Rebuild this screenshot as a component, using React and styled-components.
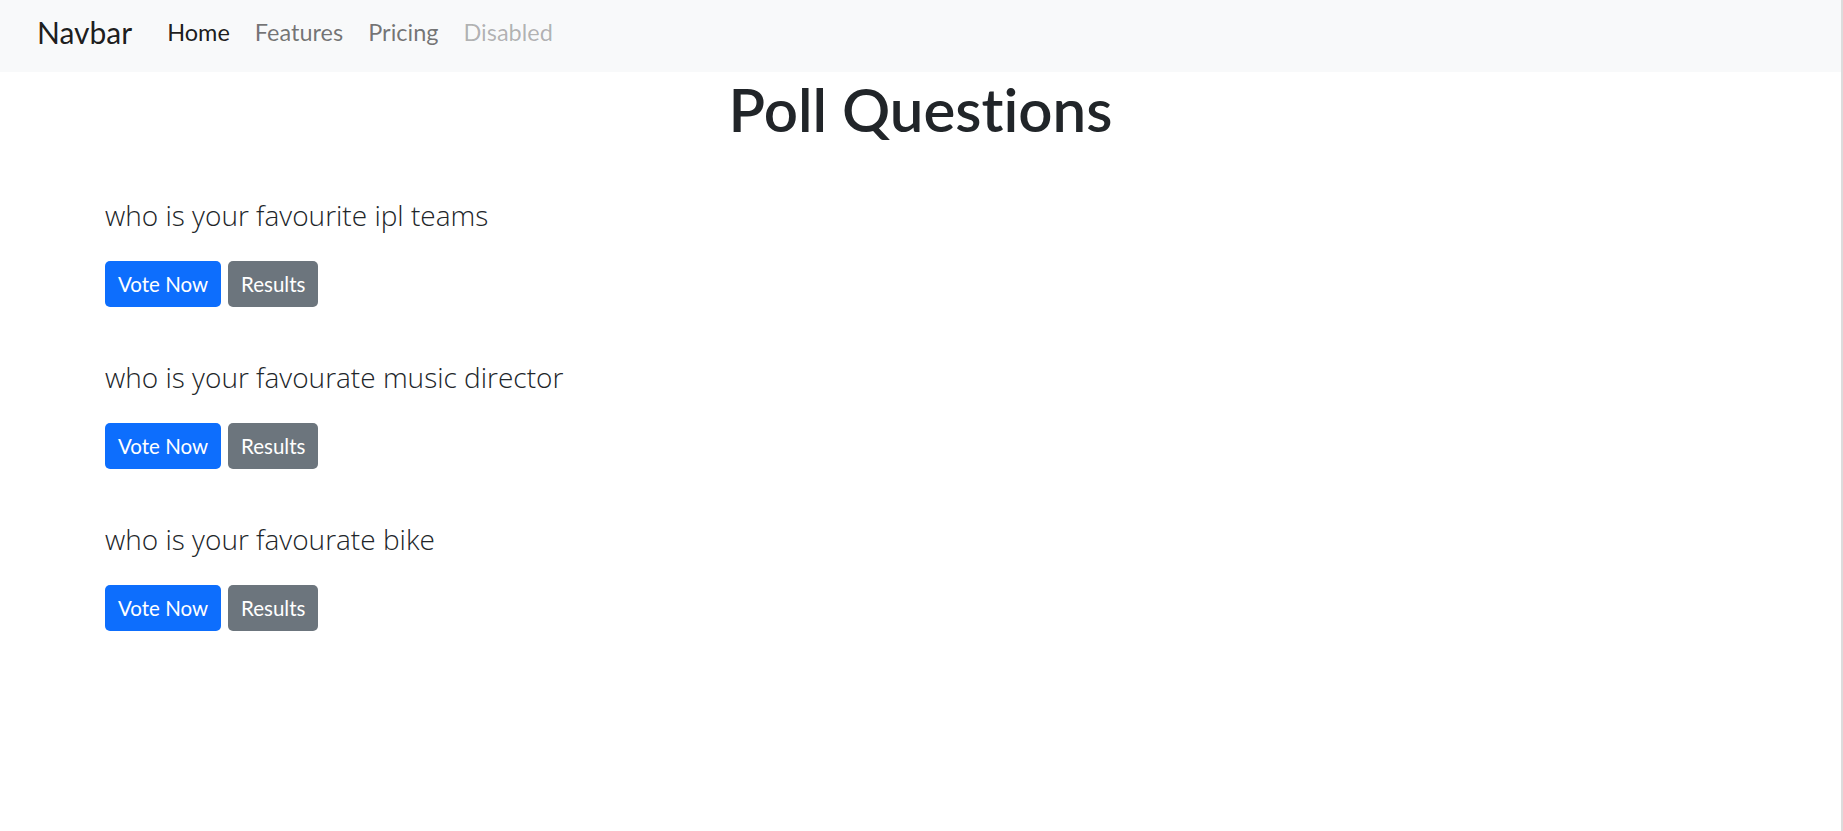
import styled, { createGlobalStyle } from "styled-components";

const GlobalStyle = createGlobalStyle`
    body {
        margin: 0;
        background-color: #fff;
        font-family: Lato, "Open Sans", sans-serif;
        font-variant-ligatures: none;
        color: #212529;
    }
`;

const Page = styled.div`
    min-height: 100vh;
    border-right: 2px solid #dcdcdc;
    box-sizing: border-box;
`;

const Nav = styled.nav`
    height: 72px;
    background-color: #f8f9fa;
    display: flex;
    align-items: center;
    padding-left: 37px;
    padding-bottom: 9px;
    box-sizing: border-box;
`;

const Brand = styled.a`
    font-size: 30px;
    color: rgba(0, 0, 0, 0.9);
    margin-right: 35px;
    text-decoration: none;
`;

const NavLinks = styled.div`
    display: flex;
    gap: 25px;
`;

const NavLink = styled.a`
    font-size: 23.5px;
    text-decoration: none;
    color: ${(props) =>
        props.active ? "rgba(0,0,0,.9)" : props.disabled ? "rgba(0,0,0,.3)" : "rgba(0,0,0,.55)"};
`;

const Title = styled.h1`
    margin: 1px 0 0;
    font-size: 60px;
    line-height: 72px;
    font-weight: 600;
    text-align: center;
`;

const PollList = styled.div`
    padding: 0 105px;
    margin-top: 52px;
    display: flex;
    flex-direction: column;
    gap: 52px;
`;

const Poll = styled.div``;

const Question = styled.p`
    margin: 0 0 28px;
    font-family: "Open Sans", sans-serif;
    font-size: 28px;
    line-height: 36px;
    font-weight: 300;
`;

const ButtonRow = styled.div`
    display: flex;
    gap: 7px;
`;

const Button = styled.button`
    height: 46px;
    padding: 0 13px;
    border: none;
    border-radius: 5px;
    font-family: inherit;
    font-size: 20.5px;
    color: #fff;
    background-color: ${(props) => (props.variant === "secondary" ? "#6c757d" : "#0d6efd")};
    cursor: pointer;
`;

const polls = [
    "who is your favourite ipl teams",
    "who is your favourate music director",
    "who is your favourate bike",
];

const App = () => {
    return (
        <Page>
            <GlobalStyle />
            <Nav>
                <Brand href="#">Navbar</Brand>
                <NavLinks>
                    <NavLink active href="#">Home</NavLink>
                    <NavLink href="#">Features</NavLink>
                    <NavLink href="#">Pricing</NavLink>
                    <NavLink disabled>Disabled</NavLink>
                </NavLinks>
            </Nav>
            <Title>Poll Questions</Title>
            <PollList>
                {polls.map((q, i) => (
                    <Poll key={i}>
                        <Question>{q}</Question>
                        <ButtonRow>
                            <Button>Vote Now</Button>
                            <Button variant="secondary">Results</Button>
                        </ButtonRow>
                    </Poll>
                ))}
            </PollList>
        </Page>
    );
};

export default App;
